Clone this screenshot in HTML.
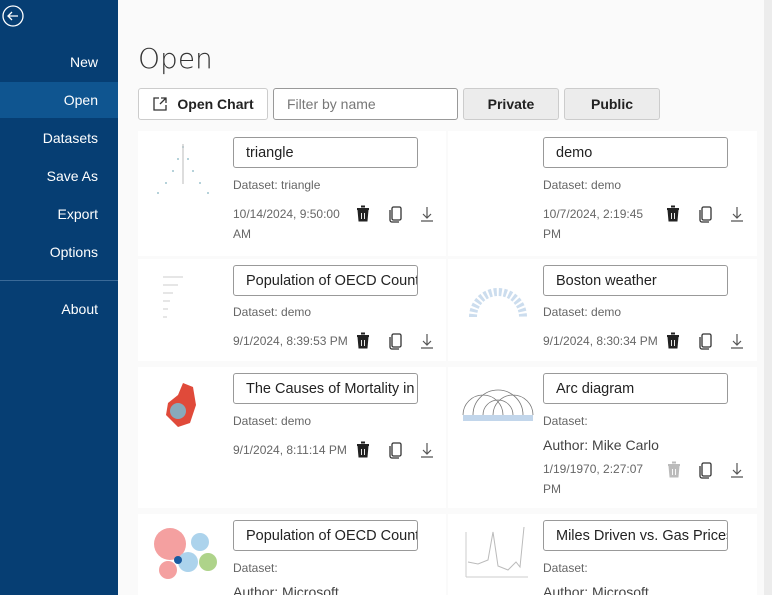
<!DOCTYPE html>
<html><head><style>
*{box-sizing:border-box;margin:0;padding:0}
html,body{width:772px;height:595px;overflow:hidden}
body{font-family:"Liberation Sans",sans-serif;background:#f5f5f5;position:relative}
.side{position:absolute;left:0;top:0;width:118px;height:595px;background:#063e73}
.side .it{position:absolute;right:20px;color:#fff;font-size:14px}
.sel{position:absolute;left:0;top:82px;width:118px;height:36px;background:#0f5590}
.main{position:absolute;left:118px;top:0;width:646px;height:595px;background:#fafafa}
.scroll{position:absolute;left:764px;top:0;width:8px;height:595px;background:#ececec}
h1{position:absolute;left:138px;top:42px;font-size:28px;color:#333;font-family:"DejaVu Sans",sans-serif;font-weight:200}
.btn{position:absolute;top:88px;height:32px;border:1px solid #ccc;border-radius:3px;font-size:14px;font-weight:bold;color:#222;display:flex;align-items:center;justify-content:center}
.card{position:absolute;background:#fff}
.in{position:absolute;left:95px;width:185px;height:31px;border:1px solid #999;border-radius:3px;font-size:14.5px;color:#222;padding:7px 12px;white-space:nowrap;overflow:hidden}
.t{position:absolute;left:95px;font-size:12px;color:#666;line-height:20px}
.a{position:absolute;left:95px;font-size:14px;color:#444}
.th{position:absolute;left:10px;top:8px;width:78px;height:62px}
</style></head><body>
<div class="side">
<svg style="position:absolute;left:2px;top:5px" width="22" height="22" viewBox="0 0 22 22"><circle cx="11" cy="11" r="10" fill="none" stroke="#fff" stroke-width="1.3"/><path d="M16 11H6M10 7l-4 4 4 4" fill="none" stroke="#fff" stroke-width="1.3"/></svg>
<div class="sel"></div>
<div class="it" style="top:54px">New</div>
<div class="it" style="top:92px">Open</div>
<div class="it" style="top:130px">Datasets</div>
<div class="it" style="top:168px">Save As</div>
<div class="it" style="top:206px">Export</div>
<div class="it" style="top:244px">Options</div>
<div style="position:absolute;left:0;top:280px;width:118px;height:1px;background:#3a6a98"></div>
<div class="it" style="top:301px">About</div>
</div>
<div class="main"></div>
<div class="scroll"></div>
<h1>Open</h1>
<div class="btn" style="left:138px;width:130px;background:#fff"><svg width="16" height="16" viewBox="0 0 16 16" style="margin-right:9px"><path d="M7 2H2v12h12V9M9 2h5v5M14 2L8 8" fill="none" stroke="#333" stroke-width="1.3"/></svg>Open Chart</div>
<div class="btn" style="left:273px;width:185px;background:#fff;justify-content:flex-start;padding-left:13px;font-weight:normal;color:#777;border-color:#999">Filter by name</div>
<div class="btn" style="left:463px;width:96px;background:#ececec">Private</div>
<div class="btn" style="left:564px;width:96px;background:#ececec">Public</div>

<div class="card" style="left:138px;top:131px;width:308px;height:125px">
<svg class="th" viewBox="0 0 78 62"><g fill="#7ab" opacity=".7"><circle cx="35" cy="8" r="1"/><circle cx="30" cy="20" r="1"/><circle cx="40" cy="20" r="1"/><circle cx="25" cy="32" r="1"/><circle cx="45" cy="32" r="1"/><circle cx="18" cy="44" r="1"/><circle cx="52" cy="44" r="1"/><circle cx="10" cy="54" r="1"/><circle cx="60" cy="54" r="1"/></g><line x1="35" y1="5" x2="35" y2="45" stroke="#bbb"/></svg>
<div class="in" style="top:6px">triangle</div>
<div class="t" style="top:44px">Dataset: triangle</div>
<div class="t" style="top:73px;width:115px">10/14/2024, 9:50:00 AM</div>
</div>
<div class="card" style="left:448px;top:131px;width:309px;height:125px">
<div class="in" style="top:6px">demo</div>
<div class="t" style="top:44px">Dataset: demo</div>
<div class="t" style="top:73px;width:108px">10/7/2024, 2:19:45 PM</div>
</div>
<div class="card" style="left:138px;top:259px;width:308px;height:102px">
<svg class="th" viewBox="0 0 78 62"><g stroke="#ccc"><line x1="15" y1="10" x2="35" y2="10"/><line x1="15" y1="18" x2="30" y2="18"/><line x1="15" y1="26" x2="25" y2="26"/><line x1="15" y1="34" x2="22" y2="34"/><line x1="15" y1="42" x2="20" y2="42"/><line x1="15" y1="50" x2="19" y2="50"/></g></svg>
<div class="in" style="top:6px">Population of OECD Countries</div>
<div class="t" style="top:43px">Dataset: demo</div>
<div class="t" style="top:72px">9/1/2024, 8:39:53 PM</div>
</div>
<div class="card" style="left:448px;top:259px;width:309px;height:102px">
<svg class="th" viewBox="0 0 78 62"><path d="M15 50A25 25 0 1 1 65 50" fill="none" stroke="#cde" stroke-width="8" stroke-dasharray="3 2"/></svg>
<div class="in" style="top:6px">Boston weather</div>
<div class="t" style="top:43px">Dataset: demo</div>
<div class="t" style="top:72px">9/1/2024, 8:30:34 PM</div>
</div>
<div class="card" style="left:138px;top:367px;width:308px;height:141px">
<svg class="th" viewBox="0 0 78 62"><path d="M35 8L45 12 48 30 42 48 30 52 18 40 20 28 30 20Z" fill="#e04a3a"/><circle cx="30" cy="36" r="8" fill="#8ab"/></svg>
<div class="in" style="top:6px">The Causes of Mortality in the</div>
<div class="t" style="top:44px">Dataset: demo</div>
<div class="t" style="top:73px">9/1/2024, 8:11:14 PM</div>
</div>
<div class="card" style="left:448px;top:367px;width:309px;height:141px">
<svg class="th" viewBox="0 0 78 62"><g fill="none" stroke="#777" stroke-width=".8"><path d="M5 40A20 20 0 0 1 45 40M15 40A25 25 0 0 1 65 40M25 40A15 15 0 0 1 55 40M35 40A20 20 0 0 1 75 40"/></g><rect x="5" y="40" width="70" height="6" fill="#9bd" opacity=".6"/></svg>
<div class="in" style="top:6px">Arc diagram</div>
<div class="t" style="top:44px">Dataset:</div>
<div class="a" style="top:70px">Author: Mike Carlo</div>
<div class="t" style="top:92px;width:108px">1/19/1970, 2:27:07 PM</div>
</div>
<div class="card" style="left:138px;top:514px;width:308px;height:81px">
<svg class="th" viewBox="0 0 78 62"><circle cx="22" cy="22" r="16" fill="#f4a0a0"/><circle cx="52" cy="20" r="9" fill="#acd3ec"/><circle cx="60" cy="40" r="9" fill="#aed38a"/><circle cx="40" cy="40" r="10" fill="#acd3ec"/><circle cx="20" cy="48" r="9" fill="#f4a0a0"/><circle cx="30" cy="38" r="4" fill="#1a5aa0"/></svg>
<div class="in" style="top:6px">Population of OECD Countries</div>
<div class="t" style="top:44px">Dataset:</div>
<div class="a" style="top:70px">Author: Microsoft</div>
</div>
<div class="card" style="left:448px;top:514px;width:309px;height:81px">
<svg class="th" viewBox="0 0 78 62"><path d="M8 55V10M8 55H70" stroke="#ccc" fill="none"/><path d="M10 40L20 42 30 38 35 10 40 44 50 48 58 40 62 45 66 5" fill="none" stroke="#bbb"/></svg>
<div class="in" style="top:6px">Miles Driven vs. Gas Prices</div>
<div class="t" style="top:44px">Dataset:</div>
<div class="a" style="top:70px">Author: Microsoft</div>
</div>

<svg width="772" height="595" style="position:absolute;left:0;top:0;pointer-events:none">
<defs>
<g id="tr"><path d="M-6-5h12M-2-7.5h4" stroke-width="2" fill="none"/><path d="M-5-4h10l-1 11h-8z"/><path d="M-1.5-1v6M1.5-1v6" stroke="#fff" stroke-width=".9"/></g>
<g id="cp"><rect x="-4" y="-7" width="9" height="13" rx="1.5" fill="none" stroke="#333" stroke-width="1.3"/><path d="M-6-4v10a2 2 0 0 0 2 2h7" fill="none" stroke="#333" stroke-width="1.3"/></g>
<g id="dl"><path d="M0-7v11M-4 0l4 4 4-4M-6 7h12" fill="none" stroke="#555" stroke-width="1.2"/></g>
</defs>
<g fill="#222" stroke="#222"><use href="#tr" x="363" y="214"/><use href="#tr" x="673" y="214"/><use href="#tr" x="363" y="341"/><use href="#tr" x="673" y="341"/><use href="#tr" x="363" y="450"/></g>
<g fill="#bbb" stroke="#bbb"><use href="#tr" x="674" y="470"/></g>
<use href="#cp" x="396" y="214"/><use href="#cp" x="706" y="214"/><use href="#cp" x="396" y="341"/><use href="#cp" x="706" y="341"/><use href="#cp" x="396" y="450"/><use href="#cp" x="706" y="470"/>
<use href="#dl" x="427" y="214"/><use href="#dl" x="737" y="214"/><use href="#dl" x="427" y="341"/><use href="#dl" x="737" y="341"/><use href="#dl" x="427" y="450"/><use href="#dl" x="737" y="470"/>
</svg>
</body></html>
